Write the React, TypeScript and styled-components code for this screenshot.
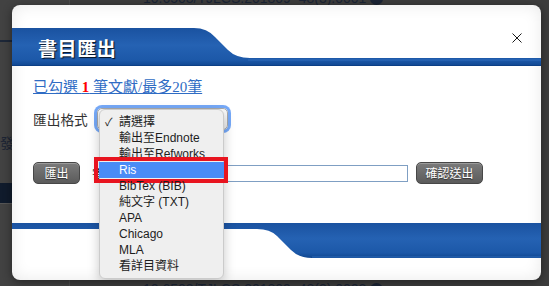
import React from "react";
import styled, { createGlobalStyle } from "styled-components";

const Global = createGlobalStyle`
  html, body { margin: 0; padding: 0; }
  body {
    width: 549px; height: 286px; overflow: hidden; background: #3d3d3d;
    font-family: "Liberation Sans", "Noto Sans CJK TC", sans-serif;
  }
`;

const Stage = styled.div`
  position: relative; width: 549px; height: 286px; overflow: hidden; background: #3d3d3d;
`;

const BackPage = styled.div`
  display: grid; grid-template-columns: 70px 1fr; height: 100%;
`;

const BackSide = styled.div`
  background: #424242; border-right: 1px solid #4d4d4d;
  display: flex; flex-direction: column;
`;

const SideLine = styled.div`
  height: 2px; background: #1d2738; margin-top: ${(p: { $top: number }) => p.$top}px;
`;

const SideBand = styled.div`
  height: 20px; background: #101b2c; border-bottom: 1px solid #555; margin-top: 33px;
`;

const SideText = styled.div`
  margin-top: 92px; font-size: 14px; line-height: 16px; color: #1c2434; white-space: nowrap;
  font-family: "Noto Sans CJK TC", sans-serif;
`;

const BackMain = styled.div`
  display: flex; flex-direction: column; justify-content: space-between; padding-left: 73px;
`;

const Doi = styled.div`
  font-size: 14px; line-height: 16px; color: #1b2435; white-space: nowrap;
  display: flex; align-items: center; gap: 4px;
  margin-top: ${(p: { $edge: "top" | "bottom" }) => (p.$edge === "top" ? "-10px" : "0")};
  margin-bottom: ${(p: { $edge: "top" | "bottom" }) => (p.$edge === "bottom" ? "-11px" : "0")};
`;

const DoiIcon = styled.span`
  display: inline-block; width: 13px; height: 13px; border-radius: 50%; background: #1b2435;
`;

const Modal = styled.div`
  position: absolute; left: 12px; top: 5px; width: 529px;
  background: #fff; border-radius: 8px; overflow: hidden;
  box-shadow: inset 0 0 16px rgba(0, 0, 0, 0.09), 0 2px 10px rgba(0, 0, 0, 0.45);
  padding-top: 23px; padding-bottom: 22px;
  display: flex; flex-direction: column;
`;

const Header = styled.div`
  position: relative; height: 38px; display: flex; align-items: center;
  padding: 0 0 0 26px;
`;

const BandArt = styled.svg`
  position: absolute; inset: 0; width: 100%; height: 100%; display: block;
`;

const Title = styled.h2`
  position: relative; margin: 0 0 0 0; padding-top: 1px;
  font-family: "Noto Sans CJK TC", serif; font-weight: 700; font-size: 19px; letter-spacing: 0.6px;
  color: #fff; text-shadow: 1px 1px 1px rgba(0, 0, 0, 0.8);
`;

const Close = styled.button`
  position: absolute; top: 26px; right: 19px; width: 10px; height: 10px;
  padding: 0; margin: 0; border: 0; background: transparent; display: block;
`;

const Body = styled.div`
  display: flex; flex-direction: column; padding: 0 21px; height: 157px; box-sizing: border-box;
`;

const Count = styled.a`
  margin-top: 12px; font-family: "Liberation Serif", "Noto Sans CJK TC", serif;
  font-size: 15px; line-height: 18px; color: #2f6cc4; text-decoration: underline;
  white-space: nowrap; align-self: flex-start;
`;

const Num = styled.b`
  color: #ff0000; font-family: "Liberation Serif", serif;
`;

const Row = styled.div`
  display: flex; align-items: center; height: 22px;
  margin-top: ${(p: { $mt: number }) => p.$mt}px;
`;

const Label = styled.span`
  font-family: "Noto Sans CJK TC", sans-serif; font-size: 13.7px; color: #333; width: 56px;
  margin-right: 8px; white-space: nowrap;
`;

const SelectWrap = styled.div`
  position: relative; width: 129px; height: 20px; border-radius: 5px;
  background: linear-gradient(#fdfdfd, #ececec); border: 1px solid #a9a9a9;
  box-shadow: 0 0 0 3px rgba(72, 140, 245, 0.75);
`;

const Menu = styled.ul`
  position: absolute; top: 0; left: 1px; z-index: 3;
  width: 125px; margin: 0; padding: 4px 0; list-style: none; box-sizing: border-box;
  background: #efefef; border: 1px solid #cbcbcb; border-radius: 6px;
  box-shadow: 0 4px 12px rgba(0, 0, 0, 0.22);
`;

const Item = styled.li<{ $active?: boolean }>`
  position: relative; height: 16px; line-height: 16px; padding-left: 20px;
  font-size: 12px; white-space: nowrap; overflow: visible;
  color: ${(p) => (p.$active ? "#fff" : "#1d1d1d")};
  background: ${(p) => (p.$active ? "#4a8cf6" : "transparent")};
  margin: 0 -1px;
  &::after {
    content: "";
    display: ${(p) => (p.$active ? "block" : "none")};
    position: absolute; top: -5px; bottom: -5px; left: -5px; right: -4px;
    border: 4px solid #e8141f;
  }
`;

const Check = styled.span`
  position: absolute; left: 6px; top: 0; font-size: 11px;
`;

const GrayButton = styled.button<{ $w: number }>`
  width: ${(p) => p.$w}px; height: 22px; padding: 0; box-sizing: border-box;
  border: 1px solid #474747; border-radius: 5px;
  background: linear-gradient(#7b7b7b, #5b5b5b);
  box-shadow: inset 0 1px 0 rgba(255, 255, 255, 0.25);
  color: #fff; font-family: "Noto Sans CJK TC", sans-serif; font-size: 12px; line-height: 20px;
  text-shadow: 0 1px 1px rgba(0, 0, 0, 0.5);
`;

const MailLabel = styled.span`
  margin-left: 12px; width: 100px; margin-right: 4px;
  font-family: "Noto Sans CJK TC", sans-serif; font-size: 13px; color: #333; white-space: nowrap;
`;

const MailInput = styled.input`
  width: 212px; height: 17px; box-sizing: border-box; margin: 0 8px 0 0; padding: 0 4px;
  border: 1px solid #7f9fc3; background: #fff; outline: none;
`;

const BottomBand = styled.div`
  position: relative; height: 35px;
`;

const items = [
  "請選擇",
  "輸出至Endnote",
  "輸出至Refworks",
  "Ris",
  "BibTex (BIB)",
  "純文字 (TXT)",
  "APA",
  "Chicago",
  "MLA",
  "看詳目資料",
];

const BlueDefs = ({ id }: { id: string }) => (
  <defs>
    <linearGradient id={id} x1="0" y1="0" x2="0" y2="1">
      <stop offset="0" stopColor="#1a52a0" />
      <stop offset="0.45" stopColor="#2562b3" />
      <stop offset="0.85" stopColor="#1c58a8" />
      <stop offset="1" stopColor="#0f4690" />
    </linearGradient>
  </defs>
);

export default function App() {
  return (
    <Stage>
      <Global />
      <BackPage>
        <BackSide>
          <SideLine $top={40} />
          <SideText>發</SideText>
          <SideBand />
        </BackSide>
        <BackMain>
          <Doi $edge="top">
            10.6503/TJLCS.201809_48(3).0001 <DoiIcon />
          </Doi>
          <Doi $edge="bottom">
            10.6503/TJLCS.201809_48(3).0002 <DoiIcon />
          </Doi>
        </BackMain>
      </BackPage>

      <Modal>
        <Header>
          <BandArt viewBox="0 0 529 38" preserveAspectRatio="none">
            <BlueDefs id="hdr" />
            <path
              d="M0 0 H182 Q195 0 203 9 L216 22 Q224 30 238 30 H529 V38 H0 Z"
              fill="url(#hdr)"
            />
            <path d="M236 32 H529" stroke="#3b78c8" strokeWidth="1" opacity="0.6" />
            <rect x="0" y="37" width="529" height="1" fill="#0c3f86" />
          </BandArt>
          <Title>書目匯出</Title>
        </Header>
        <Close aria-label="close">
          <svg width="10" height="10" viewBox="0 0 10 10">
            <path d="M0.5 0.5 L9.5 9.5 M9.5 0.5 L0.5 9.5" stroke="#1a1a1a" strokeWidth="1" />
          </svg>
        </Close>

        <Body>
          <Count href="#">
            已勾選 <Num>1</Num> 筆文獻/最多20筆
          </Count>
          <Row $mt={12}>
            <Label>匯出格式</Label>
            <SelectWrap>
              <Menu>
                {items.map((t, i) => (
                  <Item key={t} $active={t === "Ris"}>
                    {i === 0 && <Check>✓</Check>}
                    {t}
                  </Item>
                ))}
              </Menu>
            </SelectWrap>
          </Row>
          <Row $mt={32}>
            <GrayButton $w={47}>匯出</GrayButton>
            <MailLabel>寄送E-mail：</MailLabel>
            <MailInput />
            <GrayButton $w={67}>確認送出</GrayButton>
          </Row>
        </Body>

        <BottomBand>
          <BandArt viewBox="0 0 529 35" preserveAspectRatio="none">
            <BlueDefs id="ftr" />
            <path
              d="M0 0 H529 V35 H300 Q287 35 279 27 L265 13 Q258 6 245 6 H0 Z"
              fill="url(#ftr)"
            />
            <path d="M300 34 H529" stroke="#3b78c8" strokeWidth="1" opacity="0.7" />
          </BandArt>
        </BottomBand>
      </Modal>
    </Stage>
  );
}
